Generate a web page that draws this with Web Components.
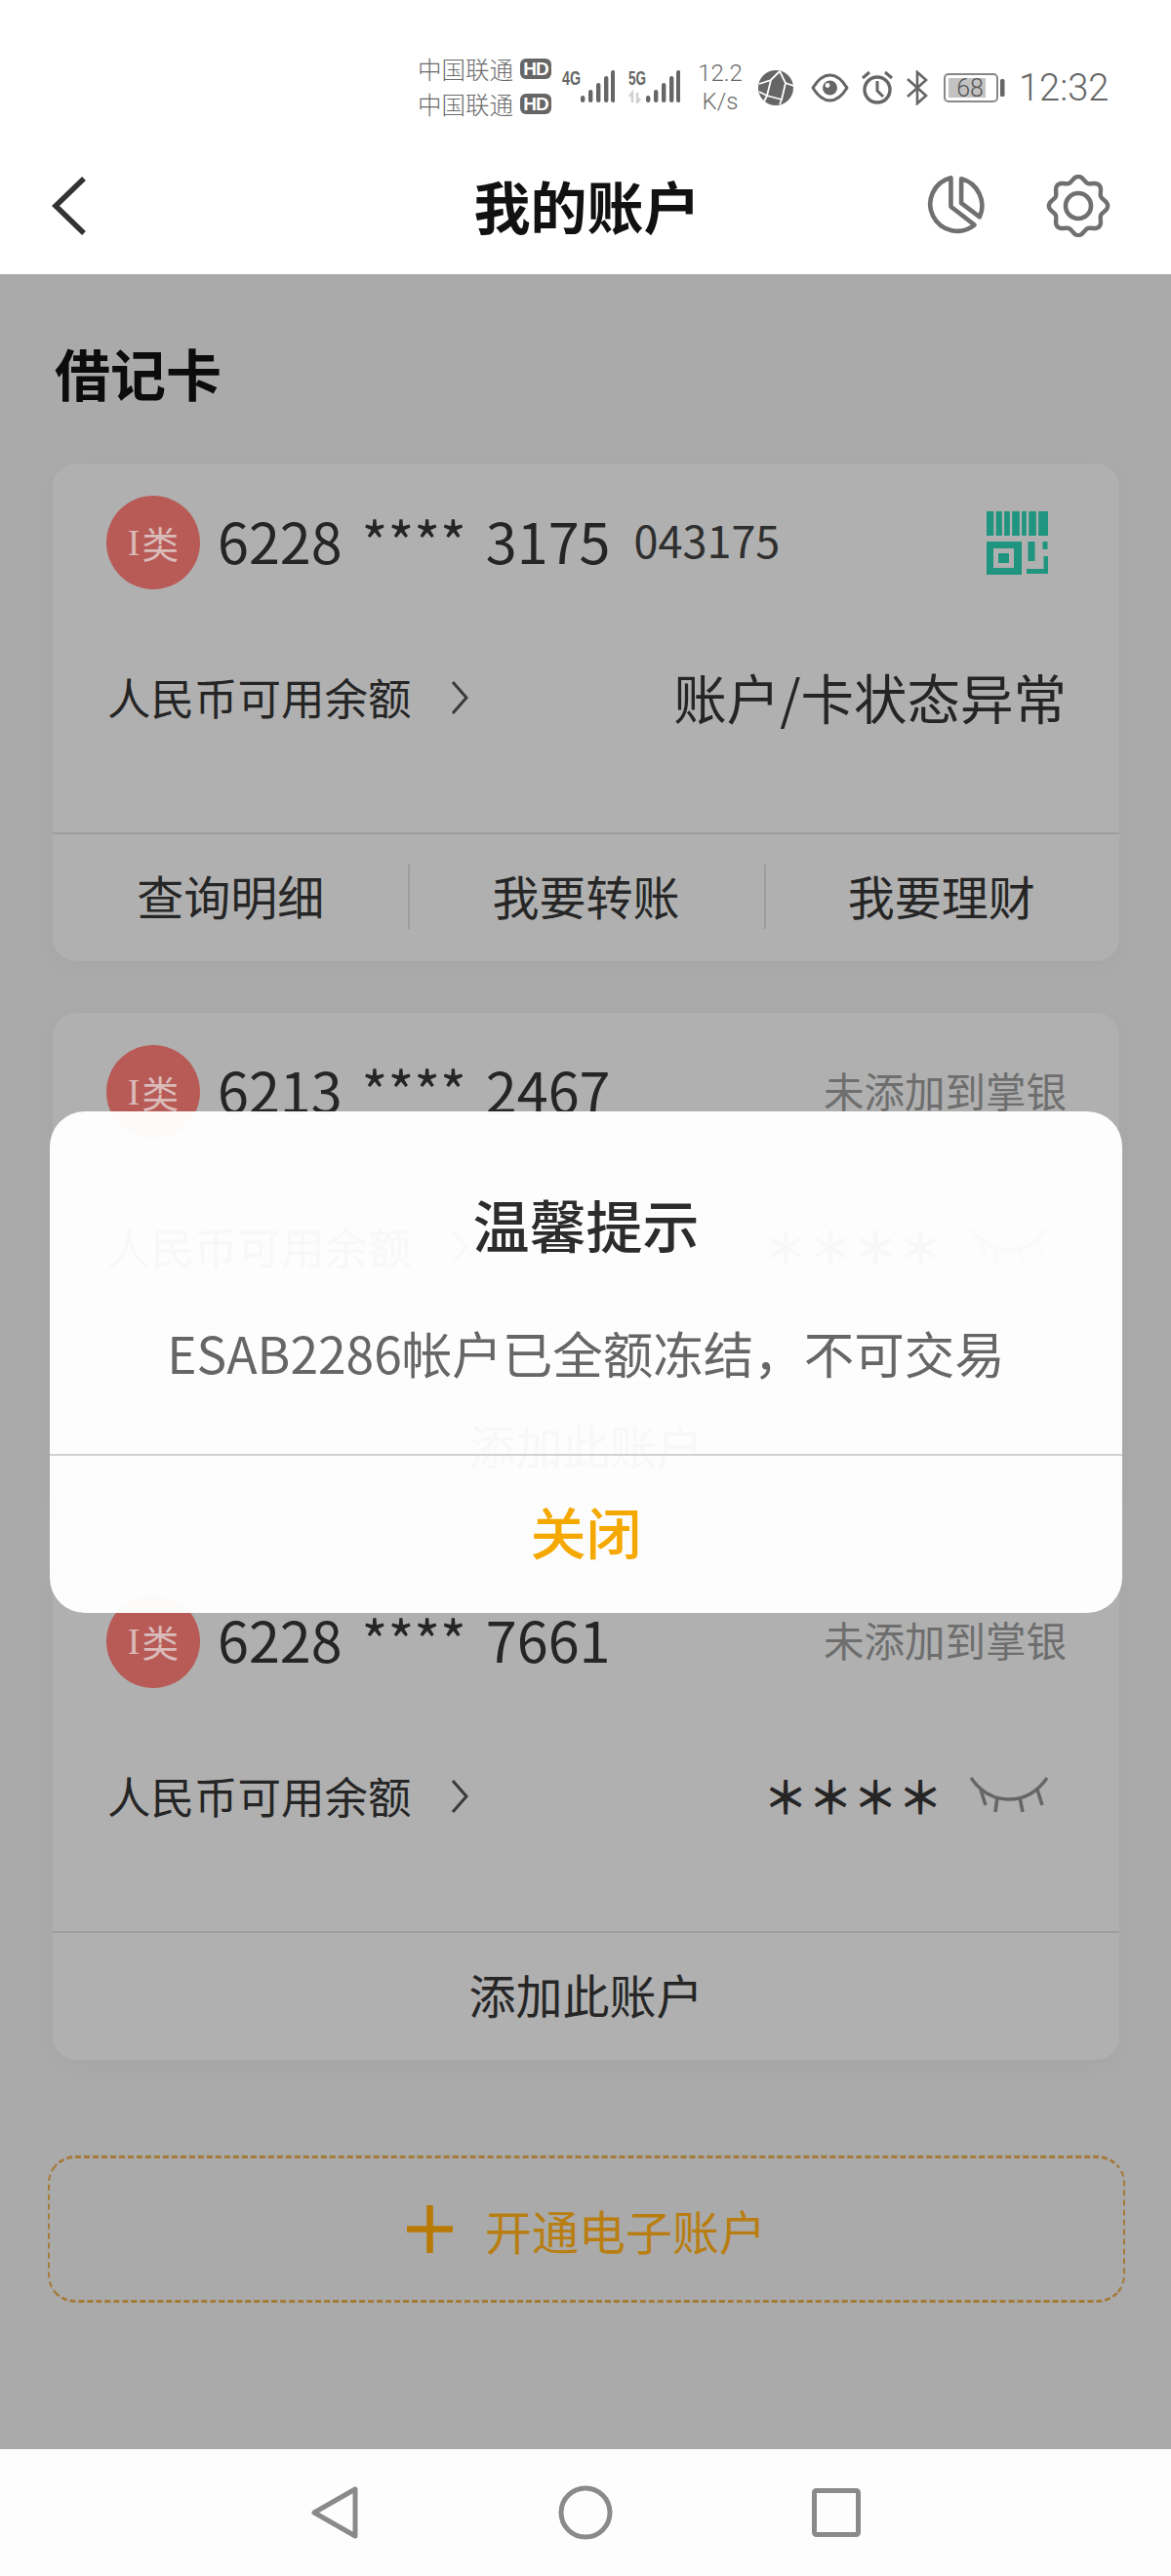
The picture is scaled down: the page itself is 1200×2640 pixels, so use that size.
<!DOCTYPE html>
<html lang="zh">
<head>
<meta charset="utf-8">
<title>我的账户</title>
<style>
  html, body { margin: 0; padding: 0; width: 1200px; height: 2640px; overflow: hidden; background: #aaa; }
  body { font-family: "Noto Sans CJK SC", "Noto Sans", sans-serif; }
</style>
</head>
<body>
<app-screen>
  <status-bar slot="status"></status-bar>
  <nav-header slot="header">我的账户</nav-header>

  <section-title>借记卡</section-title>

  <account-card number="6228 **** 3175" tail="043175" balance="账户/卡状态异常" added>
    <action-item>查询明细</action-item>
    <action-item divided>我要转账</action-item>
    <action-item divided>我要理财</action-item>
  </account-card>
  <account-card number="6213 **** 2467">
    <action-item>添加此账户</action-item>
  </account-card>
  <account-card number="6228 **** 7661">
    <action-item>添加此账户</action-item>
  </account-card>

  <open-account>开通电子账户</open-account>

  <soft-keys slot="keys"></soft-keys>
  <alert-dialog slot="dialog" heading="温馨提示" action="关闭">ESAB2286帐户已全额冻结，不可交易</alert-dialog>
</app-screen>

<script>
class AppScreen extends HTMLElement {
    constructor() {
        super();
        this.attachShadow({ mode: 'open' });
        this.shadowRoot.innerHTML = `
            <style>
                :host { display: flex; flex-direction: column; position: relative; width: 1200px; height: 2640px; overflow: hidden; }
                main { flex: 1; background: #aaa; padding: 0 53px 0 54px; display: flex; flex-direction: column; }
            </style>
            <slot name="status"></slot>
            <slot name="header"></slot>
            <main><slot></slot></main>
            <slot name="keys"></slot>
            <slot name="dialog"></slot>
        `;
    }
}

class StatusBar extends HTMLElement {
    constructor() {
        super();
        this.attachShadow({ mode: 'open' });
        const bars = (xs, tops) => xs.map((x, i) =>
            `<rect x="${x}" y="${tops[i]}" width="4.4" height="${35 - tops[i]}" rx="2.2" fill="#666"/>`).join('');
        const tops = [28, 22, 15, 8, 2];
        this.shadowRoot.innerHTML = `
            <style>
                :host { display: flex; align-items: center; justify-content: flex-end; height: 124px; padding: 28px 66px 0 0; background: #fff; color: #6a6a6a; font-family: Roboto, "Noto Sans CJK SC", sans-serif; }
                svg { display: block; flex: none; }
                .carriers { display: grid; grid-template-columns: 98px 32px; column-gap: 7px; align-items: center; font-family: "Noto Sans CJK SC", sans-serif; font-size: 24.500px; font-weight: 300; line-height: 36px; margin: -3px 11px 0 0; white-space: nowrap; }
                .hd { background: #666; color: #fff; border-radius: 6px; height: 21px; font: 700 19px/21px "Liberation Sans", sans-serif; text-align: center; letter-spacing: -1px; }
                .signal { margin-top: -4px; }
                .speed { width: 48px; margin: 0 15px 0 17px; text-align: center; font-size: 24px; font-weight: 300; line-height: 29px; white-space: nowrap; }
                .time { margin-left: 14px; width: 90px; font-size: 38px; font-weight: 300; line-height: 44px; color: #666; white-space: nowrap; }
                .net { font: 700 20px "Liberation Sans Narrow", "Liberation Sans", sans-serif; fill: #666; }
            </style>
            <div class="carriers">
                <span>中国联通</span><span class="hd">HD</span>
                <span>中国联通</span><span class="hd">HD</span>
            </div>
            <svg class="signal" width="54" height="36" viewBox="0 0 54 36" style="margin-right:13px">
                <text class="net" x="0" y="17" textLength="19" lengthAdjust="spacingAndGlyphs">4G</text>
                ${bars([19, 27, 35, 43, 50], tops)}
            </svg>
            <svg class="signal" width="54" height="36" viewBox="0 0 54 36">
                <text class="net" x="1" y="17" textLength="18" lengthAdjust="spacingAndGlyphs">5G</text>
                <path d="M5 35V25L2 29M10 25V35L13 31" fill="none" stroke="#d0d0d0" stroke-width="2.4"/>
                ${bars([19, 27, 35, 43, 50], tops)}
            </svg>
            <div class="speed">12.2<br>K/s</div>
            <svg width="36" height="36" viewBox="0 0 36 36" style="margin-right:18px">
                <circle cx="18" cy="18" r="18" fill="#666"/>
                <path d="M1 14L13 10L22 1M13 10L9 26L1 22M9 26L24 30L22 35M24 30L28 13L22 1M28 13L36 16M9 26L6 32" fill="none" stroke="#fff" stroke-width="1.8"/>
            </svg>
            <svg width="39" height="30" viewBox="0 0 39 30" style="margin-right:12px">
                <path d="M2 15Q10 2 19.5 2T37 15Q29 28 19.5 28T2 15Z" fill="none" stroke="#666" stroke-width="3" stroke-linejoin="round"/>
                <circle cx="19.5" cy="15" r="7.5" fill="#666"/>
                <circle cx="17" cy="12.5" r="2.4" fill="#fff"/>
            </svg>
            <svg width="34" height="36" viewBox="0 0 34 36" style="margin-right:12px">
                <circle cx="17" cy="20" r="13" fill="none" stroke="#666" stroke-width="3.4"/>
                <path d="M17 11V21L23 27M2 8L9 2M32 8L25 2" fill="none" stroke="#666" stroke-width="3"/>
            </svg>
            <svg width="24" height="36" viewBox="0 0 24 36" style="margin-right:15px">
                <path d="M2 9L21 26L12 34V2L21 10L2 27" fill="none" stroke="#666" stroke-width="2.6"/>
            </svg>
            <svg width="63" height="30" viewBox="0 0 63 30">
                <rect x="1" y="1" width="54" height="28" rx="4" fill="#fff" stroke="#888" stroke-width="2"/>
                <rect x="5" y="5" width="38" height="20" fill="#c2c2c2"/>
                <rect x="58" y="6" width="4.5" height="18" rx="1.5" fill="#666"/>
                <text x="27" y="24" text-anchor="middle" font-size="25" font-weight="300" fill="#555" font-family="Roboto, sans-serif">68</text>
            </svg>
            <div class="time">12:32</div>
        `;
    }
}

class NavHeader extends HTMLElement {
    constructor() {
        super();
        this.attachShadow({ mode: 'open' });
        let gear = '';
        for (let i = 0; i < 96; i++) {
            const a = i / 96 * Math.PI * 2;
            const r = 27.6 + 2.6 * Math.cos(8 * a);
            gear += (i ? 'L' : 'M') + (33 + r * Math.sin(a)).toFixed(2) + ' ' + (32 - r * Math.cos(a)).toFixed(2);
        }
        this.shadowRoot.innerHTML = `
            <style>
                :host { display: flex; align-items: center; justify-content: space-between; position: relative; height: 129px; padding: 0 62px 0 51px; background: #fff; }
                h1 { position: absolute; left: 3px; right: 0; top: 0; margin: 0; text-align: center; font-size: 58px; font-weight: 700; line-height: 116px; color: #111; }
                .tools { display: flex; align-items: center; gap: 63px; position: relative; top: -6px; }
                svg { display: block; }
                .back { position: relative; top: -6px; }
            </style>
            <svg class="back" width="40" height="64" viewBox="0 0 40 64"><path d="M35 4L6 32L35 60" fill="none" stroke="#333" stroke-width="5.5"/></svg>
            <h1><slot></slot></h1>
            <div class="tools">
                <svg width="62" height="66" viewBox="0 0 174 186">
                    <path d="M77 12A78 78 0 1 0 145 148L77 95Z" fill="none" stroke="#707070" stroke-width="13" stroke-linejoin="round"/>
                    <path d="M107 15A80 80 0 0 1 160 125L107 85Z" fill="none" stroke="#707070" stroke-width="13" stroke-linejoin="round"/>
                </svg>
                <svg width="66" height="64" viewBox="0 0 66 64">
                    <path d="${gear}Z" fill="none" stroke="#707070" stroke-width="4.4"/>
                    <circle cx="33" cy="32" r="13" fill="none" stroke="#707070" stroke-width="4.6"/>
                </svg>
            </div>
        `;
    }
}

class SectionTitle extends HTMLElement {
    constructor() {
        super();
        this.attachShadow({ mode: 'open' });
        this.shadowRoot.innerHTML = `
            <style>
                :host { display: block; margin: 65px 0 59px 2px; font-size: 57px; font-weight: 700; line-height: 70px; color: #0c0c0c; }
            </style>
            <slot></slot>
        `;
    }
}

class AccountCard extends HTMLElement {
    constructor() {
        super();
        this.attachShadow({ mode: 'open' });
        const number = this.getAttribute('number');
        const tail = this.getAttribute('tail');
        const balance = this.getAttribute('balance');
        const added = this.hasAttribute('added');
        const status = added
            ? `<svg width="63" height="65" viewBox="0 0 63 65" style="margin-right:19px">
                   <path d="M0 0h63v25H0z" fill="#1f9580"/>
                   <path d="M8.500 0v25M17 0v25M25 0v25M35 0v25M42 0v25M52 0v25" stroke="#b0b0b0" stroke-width="2.4"/>
                   <path d="M0 31h36v34H0z" fill="#1f9580"/>
                   <path d="M7 38h21v20H7z" fill="#b0b0b0"/>
                   <path d="M12 43h11v10H12z" fill="#1f9580"/>
                   <path d="M46 31v20" stroke="#1f9580" stroke-width="7"/>
                   <path d="M41 61.500h20V46M60 31v8" fill="none" stroke="#1f9580" stroke-width="5"/>
               </svg>`
            : `<span class="hint">未添加到掌银</span>`;
        const amount = balance
            ? `<span class="state">${balance}</span>`
            : `<span class="mask">＊＊＊＊</span>
               <svg width="82" height="40" viewBox="0 0 82 40" style="margin-right:18px">
                   <path d="M2 3Q17 25 41 25T80 3" fill="none" stroke="#666" stroke-width="3.4"/>
                   <path d="M12 15L17 31M29 23L27 38M52 23L55 38M70 15L75 31" fill="none" stroke="#666" stroke-width="3.6"/>
               </svg>`;
        this.shadowRoot.innerHTML = `
            <style>
                :host { display: flex; flex-direction: column; height: 510px; margin-bottom: 53px; background: #b0b0b0; border-radius: 24px; box-shadow: 0 6px 24px rgba(0,0,0,.03); color: #252525; }
                .top { display: flex; align-items: center; height: 96px; margin: 33px 54px 0 55px; }
                .badge { flex: none; width: 96px; height: 96px; border-radius: 50%; background: #b85a56; color: #d9bcb9; display: flex; align-items: center; justify-content: center; font-size: 38px; line-height: 94px; }
                .badge i { font: normal 38px "Liberation Serif", serif; margin-right: 2px; }
                .number { margin: -6px 0 0 18px; font-size: 57.500px; line-height: 70px; word-spacing: 7px; white-space: nowrap; }
                .tail { margin: -6px 0 0 24px; font-size: 45px; line-height: 70px; color: #2f2f2f; }
                .spacer { flex: 1; }
                .hint { margin-top: -4px; font-size: 41.500px; color: #6e6e6e; white-space: nowrap; }
                .balance { display: flex; align-items: center; height: 64px; margin: 77px 54px 0 56px; }
                .label { font-size: 44.500px; white-space: nowrap; }
                .more { margin: 4px 0 0 39px; }
                .state { font-size: 54.500px; white-space: nowrap; }
                .mask { font-size: 46px; font-weight: 700; white-space: nowrap; margin-right: 27px; }
                .actions { margin-top: auto; height: 130px; border-top: 2px solid #9e9e9e; display: flex; align-items: stretch; }
                svg { display: block; flex: none; }
            </style>
            <div class="top">
                <span class="badge"><i>I</i>类</span>
                <span class="number">${number}</span>
                ${tail ? `<span class="tail">${tail}</span>` : ''}
                <span class="spacer"></span>
                ${status}
            </div>
            <div class="balance">
                <span class="label">人民币可用余额</span>
                <svg class="more" width="20" height="36" viewBox="0 0 20 36"><path d="M3 2L17 18L3 34" fill="none" stroke="#3a3a3a" stroke-width="3"/></svg>
                <span class="spacer"></span>
                ${amount}
            </div>
            <div class="actions"><slot></slot></div>
        `;
    }
}

class ActionItem extends HTMLElement {
    constructor() {
        super();
        this.attachShadow({ mode: 'open' });
        this.shadowRoot.innerHTML = `
            <style>
                :host { flex: 1; position: relative; display: flex; align-items: center; justify-content: center; padding-bottom: 6px; font-size: 48px; color: #262626; }
                :host([divided])::before { content: ""; position: absolute; left: 0; top: 31px; height: 66px; width: 2px; background: #9c9c9c; }
            </style>
            <slot></slot>
        `;
    }
}

class OpenAccount extends HTMLElement {
    constructor() {
        super();
        this.attachShadow({ mode: 'open' });
        this.shadowRoot.innerHTML = `
            <style>
                :host { display: flex; align-items: center; justify-content: center; gap: 33px; height: 145px; margin: 45px -6px 0 -5px; border-style: dashed; border-color: #a57b3a; border-width: 3px 2px; border-radius: 28px; color: #b87e12; font-size: 48px; }
                svg { display: block; }
            </style>
            <svg width="47" height="49" viewBox="0 0 47 49"><path d="M0 24.500H47M23.500 0V49" stroke="#b87a05" stroke-width="6.500"/></svg>
            <span><slot></slot></span>
        `;
    }
}

class SoftKeys extends HTMLElement {
    constructor() {
        super();
        this.attachShadow({ mode: 'open' });
        this.shadowRoot.innerHTML = `
            <style>
                :host { display: block; height: 130px; background: #fdfdfd; }
                .keys { display: flex; align-items: center; justify-content: center; gap: 204px; height: 100%; box-sizing: border-box; }
                svg { display: block; }
            </style>
            <div class="keys">
                <svg width="50" height="56" viewBox="0 0 50 56"><path d="M46 4V52L4 28Z" fill="none" stroke="#8a8a8a" stroke-width="5" stroke-linejoin="round"/></svg>
                <svg width="56" height="56" viewBox="0 0 56 56"><circle cx="28" cy="28" r="25" fill="none" stroke="#8a8a8a" stroke-width="5"/></svg>
                <svg width="50" height="52" viewBox="0 0 50 52"><rect x="2.500" y="3.500" width="45" height="45" rx="2" fill="none" stroke="#8a8a8a" stroke-width="5"/></svg>
            </div>
        `;
    }
}

class AlertDialog extends HTMLElement {
    constructor() {
        super();
        this.attachShadow({ mode: 'open' });
        this.shadowRoot.innerHTML = `
            <style>
                :host { position: absolute; left: 51px; top: 1139px; width: 1099px; height: 514px; display: flex; flex-direction: column; background: rgba(255,255,255,.97); border-radius: 36px; }
                h2 { margin: 77px 0 0; text-align: center; font-size: 58px; font-weight: 500; line-height: 76px; color: #2c2c2c; }
                p { margin: 56px 0 0; text-align: center; font-size: 51.500px; line-height: 76px; color: #666; white-space: nowrap; }
                button { margin-top: auto; height: 163px; border: 0; border-top: 2px solid #d2d2d2; background: none; padding: 0 0 10px; font: 500 57px "Noto Sans CJK SC", sans-serif; color: #f5a800; }
            </style>
            <h2>${this.getAttribute('heading')}</h2>
            <p><slot></slot></p>
            <button>${this.getAttribute('action')}</button>
        `;
    }
}

customElements.define('app-screen', AppScreen);
customElements.define('status-bar', StatusBar);
customElements.define('nav-header', NavHeader);
customElements.define('section-title', SectionTitle);
customElements.define('account-card', AccountCard);
customElements.define('action-item', ActionItem);
customElements.define('open-account', OpenAccount);
customElements.define('soft-keys', SoftKeys);
customElements.define('alert-dialog', AlertDialog);
</script>
</body>
</html>
